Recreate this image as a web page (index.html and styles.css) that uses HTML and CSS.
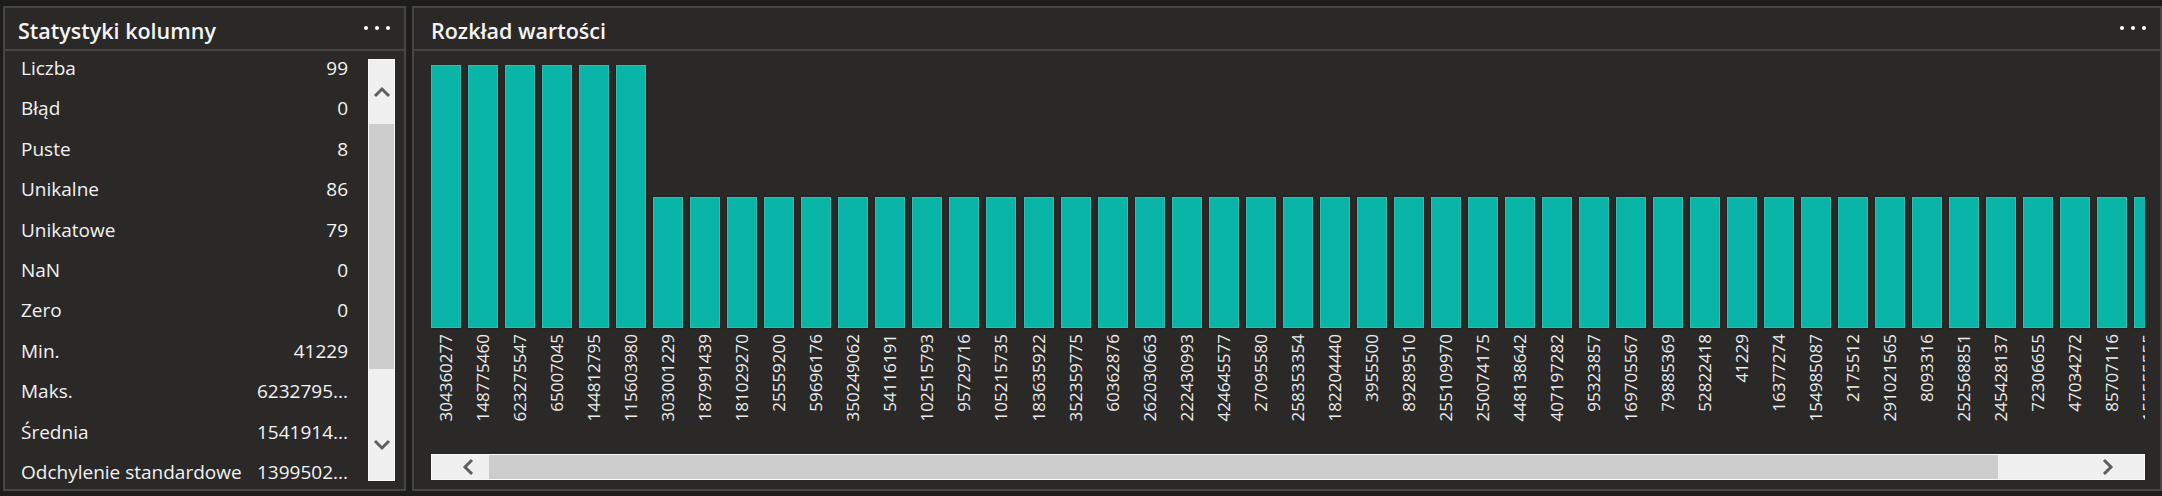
FILE: index.html
```html
<!DOCTYPE html>
<html lang="pl">
<head>
    <meta charset="UTF-8">
    <meta name="viewport" content="width=device-width, initial-scale=1.0">
    <title>Profil kolumny</title>
    <link rel="stylesheet" href="styles.css">
</head>
<body>
    <div class="page">
        <!-- Statystyki kolumny -->
        <section class="panel stats">
            <header class="panel-head">
                <h2>Statystyki kolumny</h2>
                <span class="more"><i></i><i></i><i></i></span>
            </header>
            <div class="panel-body stats-body">
                <ul class="stat-list">
                    <li><span>Liczba</span><span>99</span></li>
                    <li><span>Błąd</span><span>0</span></li>
                    <li><span>Puste</span><span>8</span></li>
                    <li><span>Unikalne</span><span>86</span></li>
                    <li><span>Unikatowe</span><span>79</span></li>
                    <li><span>NaN</span><span>0</span></li>
                    <li><span>Zero</span><span>0</span></li>
                    <li><span>Min.</span><span>41229</span></li>
                    <li><span>Maks.</span><span>6232795...</span></li>
                    <li><span>Średnia</span><span>1541914...</span></li>
                    <li><span>Odchylenie standardowe</span><span>1399502...</span></li>
                </ul>
                <div class="vscroll">
                    <div class="vscroll-btn">
                        <svg width="18" height="12" viewBox="0 0 18 12"><path d="M2 10 L9 3 L16 10" fill="none" stroke="#5f5f5f" stroke-width="3"/></svg>
                    </div>
                    <div class="vscroll-thumb"></div>
                    <div class="vscroll-btn down">
                        <svg width="18" height="12" viewBox="0 0 18 12"><path d="M2 2 L9 9 L16 2" fill="none" stroke="#5f5f5f" stroke-width="3"/></svg>
                    </div>
                </div>
            </div>
        </section>

        <!-- Rozkład wartości -->
        <section class="panel dist">
            <header class="panel-head">
                <h2>Rozkład wartości</h2>
                <span class="more"><i></i><i></i><i></i></span>
            </header>
            <div class="panel-body dist-body">
                <div class="plot" id="plot"></div>
                <div class="hscroll">
                    <div class="hscroll-btn left">
                        <svg width="14" height="18" viewBox="0 0 14 18"><path d="M11 2 L4 9 L11 16" fill="none" stroke="#5f5f5f" stroke-width="3"/></svg>
                    </div>
                    <div class="hscroll-thumb"></div>
                    <div class="hscroll-btn right">
                        <svg width="14" height="18" viewBox="0 0 14 18"><path d="M3 2 L10 9 L3 16" fill="none" stroke="#5f5f5f" stroke-width="3"/></svg>
                    </div>
                </div>
            </div>
        </section>
    </div>

    <script>
        // wartości i liczba wystąpień
        const values = [
            ["304360277", 2], ["148775460", 2], ["623275547", 2], ["65007045", 2],
            ["144812795", 2], ["115603980", 2], ["303001229", 1], ["187991439", 1],
            ["181029270", 1], ["25559200", 1], ["59696176", 1], ["350249062", 1],
            ["54116191", 1], ["102515793", 1], ["95729716", 1], ["105215735", 1],
            ["183635922", 1], ["352359775", 1], ["60362876", 1], ["262030663", 1],
            ["222430993", 1], ["424645577", 1], ["27095580", 1], ["258353354", 1],
            ["182204440", 1], ["3955500", 1], ["89289510", 1], ["255109970", 1],
            ["250074175", 1], ["448138642", 1], ["407197282", 1], ["95323857", 1],
            ["169705567", 1], ["79885369", 1], ["52822418", 1], ["41229", 1],
            ["16377274", 1], ["154985087", 1], ["2175512", 1], ["291021565", 1],
            ["8093316", 1], ["252568851", 1], ["245428137", 1], ["72306655", 1],
            ["47034272", 1], ["85707116", 1], ["155555555", 1]
        ];

        const plot = document.getElementById("plot");
        const maxCount = 2;

        values.forEach(function (item) {
            const col = document.createElement("div");
            col.className = "col";

            const area = document.createElement("div");
            area.className = "bar-area";
            const bar = document.createElement("div");
            bar.className = "bar";
            bar.style.height = (item[1] / maxCount * 100) + "%";
            area.appendChild(bar);

            const label = document.createElement("span");
            label.className = "label";
            label.textContent = item[0];

            col.appendChild(area);
            col.appendChild(label);
            plot.appendChild(col);
        });
    </script>
</body>
</html>
```

FILE: styles.css
```css
* {
    box-sizing: border-box;
}

body {
    margin: 0;
    background-color: #1d1d1c;
    font-family: "Segoe UI", "Open Sans", sans-serif;
    color: #f2f2f2;
}

.page {
    display: flex;
    gap: 6px;
    height: 496px;
    padding: 6px 0 5px 3px;
}

.panel {
    display: flex;
    flex-direction: column;
    background-color: #2a2928;
    border: 2px solid #474644;
}

.stats {
    width: 403px;
    flex: none;
}

.dist {
    flex: 1;
    min-width: 0;
}

.panel-head {
    display: flex;
    align-items: center;
    justify-content: space-between;
    height: 43px;
    flex: none;
    padding: 0 14px 0 13px;
    border-bottom: 2px solid #474644;
}

.dist .panel-head {
    padding-left: 17px;
}

.panel-head h2 {
    margin: 4px 0 0;
    font-size: 21.5px;
    font-weight: 600;
    color: #f4f4f4;
}

.more {
    display: flex;
    gap: 7px;
    margin-bottom: 2px;
}

.more i {
    width: 4px;
    height: 4px;
    border-radius: 50%;
    background-color: #fff;
}

.panel-body {
    flex: 1;
    min-height: 0;
    overflow: hidden;
}

/* lista statystyk */
.stats-body {
    display: flex;
}

.stat-list {
    flex: 1;
    list-style: none;
    margin: -3px 20px 0 0;
    padding: 0 0 0 16px;
    font-size: 19px;
}

.stat-list li {
    display: flex;
    justify-content: space-between;
    gap: 10px;
    height: 40.4px;
    line-height: 40.4px;
    white-space: nowrap;
}

.vscroll {
    display: flex;
    flex-direction: column;
    width: 27px;
    flex: none;
    margin: 8px 9px 8px 0;
    background-color: #f0f0f0;
    border: 1px solid #fafafa;
}

.vscroll-btn {
    display: flex;
    align-items: center;
    justify-content: center;
    height: 64px;
}

.vscroll-btn.down {
    flex: 1;
    align-items: flex-end;
    padding-bottom: 29px;
}

.vscroll-thumb {
    height: 245px;
    background-color: #cdcdcd;
}

/* wykres rozkładu */
.dist-body {
    display: flex;
    flex-direction: column;
    padding: 14px 15px 0 17px;
}

.plot {
    display: flex;
    gap: 7.04px;
    height: 389px;
    overflow: hidden;
}

.col {
    display: flex;
    flex-direction: column;
    width: 30px;
    flex: none;
}

.bar-area {
    display: flex;
    align-items: flex-end;
    height: 263px;
}

.bar {
    width: 100%;
    background-color: #08b5a7;
    border: 1px solid #2bc0b3;
    box-shadow: 0 0 2px rgba(0, 0, 0, 0.5);
}

.label {
    align-self: center;
    margin-top: 6px;
    writing-mode: vertical-rl;
    transform: rotate(180deg);
    font-size: 17px;
    line-height: 20px;
    color: #ececec;
}

.hscroll {
    display: flex;
    height: 26px;
    background-color: #f0f0f0;
    border: 1px solid #fafafa;
}

.hscroll-btn {
    display: flex;
    align-items: center;
}

.hscroll-btn.left {
    width: 57px;
    flex: none;
    padding-left: 29px;
}

.hscroll-btn.right {
    flex: 1;
    justify-content: flex-end;
    padding-right: 29px;
}

.hscroll-thumb {
    width: 1509px;
    flex: none;
    background-color: #cdcdcd;
}
```
